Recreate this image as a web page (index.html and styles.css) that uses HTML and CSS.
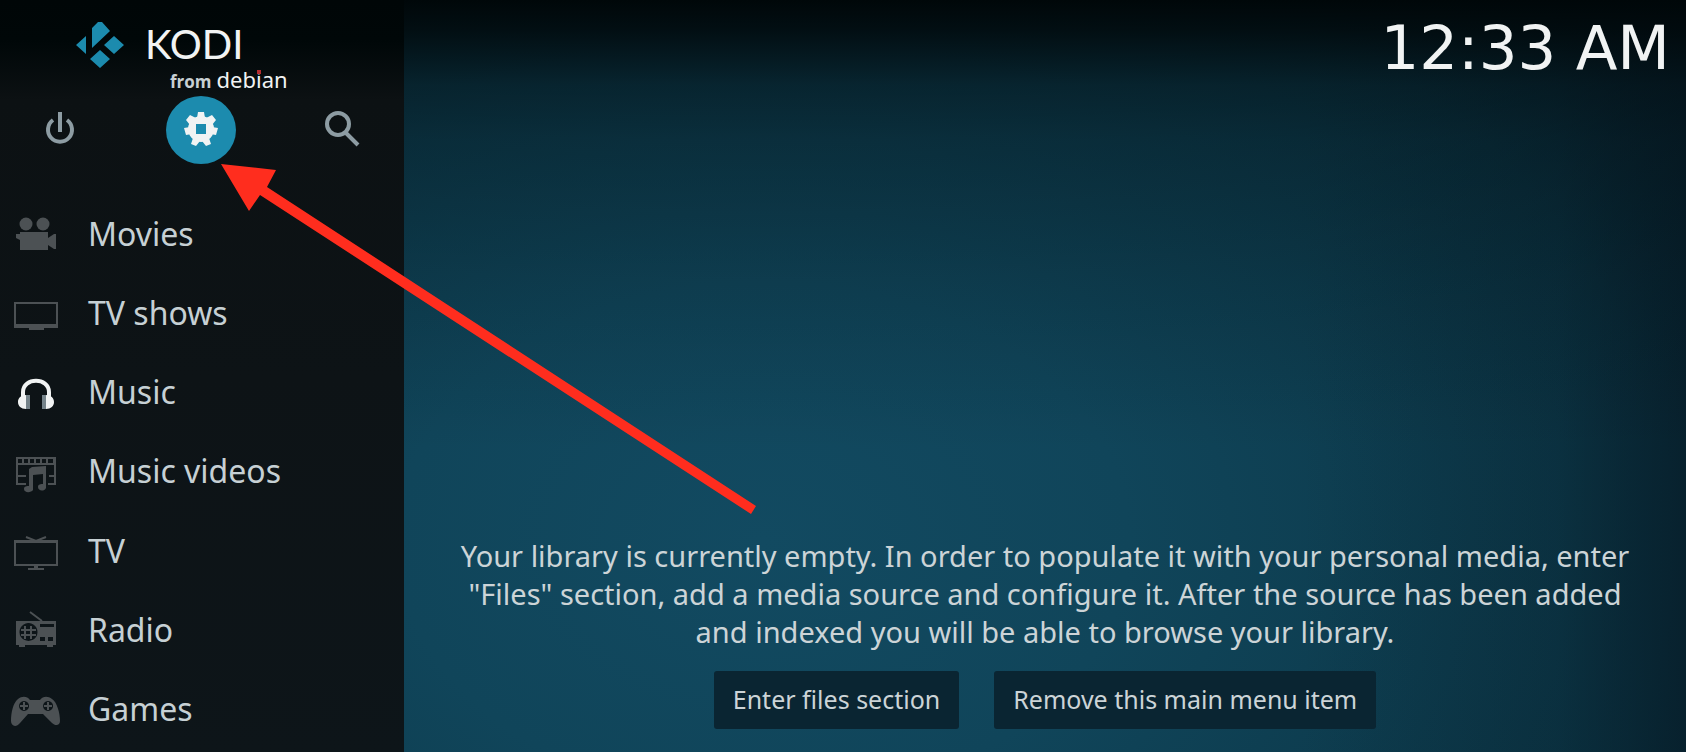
FILE: index.html
```html
<!DOCTYPE html>
<html lang="en">
<head>
<meta charset="utf-8">
<title>Kodi</title>
<link rel="stylesheet" href="styles.css">
</head>
<body>
<div class="home">
  <aside class="sidebar">
    <header class="brand">
      <svg class="brand-mark" viewBox="76 22 48 46" aria-hidden="true"><path d="M92 28l6-6h4l8 9-18 17zM86 36v18l-10-9zM114 36l10 9-10 9-10-9zM100 50l10 9-10 9-10-9z"/></svg>
      <div class="brand-text">
        <span class="brand-name">KODI</span>
        <span class="brand-origin"><span class="from">from</span> <span class="debian">deb<span class="dot">i</span>an</span></span>
      </div>
    </header>
    <div class="actions">
      <button class="action" type="button" aria-label="Power"><svg viewBox="0 0 36 36"><path class="line" d="M11 9a12 12 0 1 0 14 0M18 1v20"/></svg></button>
      <button class="action active" type="button" aria-label="Settings"><svg viewBox="0 0 36 36"><path fill-rule="evenodd" d="M18 5a13 13 0 1 0 .1 0zM13 13v10h10v-10z"/><path d="M15 1h6l1 6h-8zM3 9l4-5 6 3-6 7zM33 9l-4-5-6 3 6 7zM1 17l6-1 2 7-6 1zM35 17l-6-1-2 7 6 1zM8 33l2-6 7 3-4 5zM28 33l-2-6-7 3 4 5z"/></svg></button>
      <button class="action" type="button" aria-label="Search"><svg viewBox="0 0 36 36"><circle class="line" cx="14" cy="13" r="11"/><path class="line" d="M22 22l12 12"/></svg></button>
    </div>
    <nav class="menu">
      <a href="#" class="item"><svg viewBox="8 212 52 44"><circle cx="26" cy="224" r="6.5"/><circle cx="43" cy="224" r="6.5"/><path d="M16 234h4v-2h28v6l3-2 3-2h2v15h-2l-6-4v5H20v-10l-4-2z"/></svg>Movies</a>
      <a href="#" class="item"><svg viewBox="8 291 52 44"><path fill-rule="evenodd" d="M14 302h44v26H44v2H29v-2H14zM16 304v20h40v-20z"/></svg>TV shows</a>
      <a href="#" class="item selected"><svg viewBox="8 371 52 44"><path d="M23 399v-6c0-15 26-15 26 0v6" fill="none" stroke="currentColor" stroke-width="4"/><path d="M26 396v14c-5 0-8-3-8-7s3-7 8-7zM46 396v14c5 0 8-3 8-7s-3-7-8-7z"/><path class="shade" d="M26 396h4v14h-4zM42 396h4v14h-4z"/></svg>Music</a>
      <a href="#" class="item"><svg viewBox="8 450 52 44"><path fill-rule="evenodd" d="M16 458h40v28h-8v-2h6v-6h-5v-2h5v-10H18v10h8v2h-8v6h8v2H16zM18 460v4h4v-4zM24 460v4h4v-4zM30 460v4h4v-4zM36 460v4h4v-4zM42 460v4h4v-4zM48 460v4h5v-4z"/><path d="M29 470l3-2 14-1v22c-2 4-8 3-8-1 0-3 3-3 5-3v-10l-10 1v15c-2 3-9 3-9-1 0-3 3-3 5-3z"/></svg>Music videos</a>
      <a href="#" class="item"><svg viewBox="8 529 52 44"><path fill-rule="evenodd" d="M14 540h44v26H38v2h6v2H28v-2h6v-2H14zM16 543v21h40v-21z"/><path d="M26 537l10 4 10-4" fill="none" stroke="currentColor" stroke-width="2"/></svg>TV</a>
      <a href="#" class="item"><svg viewBox="8 609 52 44"><path fill-rule="evenodd" d="M16 622h40v24h-3v2h-6v-2H25v2h-6v-2h-3zM28 624a9 9 0 1 0 1 0zM40 625v3h14v-3zM40 638v4h5v-4zM48 638v4h5v-4z"/><path d="M30 613l12 9M25 627v13M31 627v13M21 631h15M21 636h15" fill="none" stroke="currentColor" stroke-width="2"/></svg>Radio</a>
      <a href="#" class="item"><svg viewBox="8 688 52 44"><path fill-rule="evenodd" d="M18 700c4-3 9-3 12 1h10c3-4 8-4 12-1 5 3 8 14 8 22 0 5-5 5-8 2l-9-9H28l-8 9c-4 5-9 3-9-2 0-8 2-18 7-22zM24 702a5 5 0 1 0 .1 0zM48 702a5 5 0 1 0 .1 0z"/><path d="M24 703v8M20 707h8M48 703v8M44 707h8" fill="none" stroke="currentColor" stroke-width="2"/></svg>Games</a>
    </nav>
  </aside>
  <main class="content">
    <time class="clock">12:33 AM</time>
    <section class="empty">
      <p class="message">Your library is currently empty. In order to populate it with your personal media, enter "Files" section, add a media source and configure it. After the source has been added and indexed you will be able to browse your library.</p>
      <div class="choices">
        <button class="choice" type="button">Enter files section</button>
        <button class="choice" type="button">Remove this main menu item</button>
      </div>
    </section>
  </main>
  <svg class="pointer" viewBox="0 0 760 520" aria-hidden="true"><path d="M221 164l55 6-9 17 489 319-5 8-491-319-11 16z"/></svg>
</div>
</body>
</html>
```
FILE: styles.css
```css
* {
  box-sizing: border-box;
}

body {
  margin: 0;
  background: #000;
  font-family: "Noto Sans", "Open Sans", sans-serif;
}

.home {
  position: relative;
  display: flex;
  min-height: 100vh;
  overflow: hidden;
}

.sidebar {
  display: flex;
  flex: 0 0 404px;
  flex-direction: column;
  padding-bottom: 3px;
  background: linear-gradient(#000607 0, #000708 40px, #0c1113 100px, #0d1316 50%, #0d1519 100%);
}

.brand {
  display: flex;
  align-items: flex-start;
  gap: 21px;
  height: 96px;
  padding: 22px 0 0 76px;
}

.brand-mark {
  width: 48px;
  height: 46px;
  fill: #1c8bae;
}

.brand-text {
  display: flex;
  flex-direction: column;
  color: #f1f3f3;
}

.brand-name {
  font: 40px/44px Lato, sans-serif;
}

.brand-origin {
  display: flex;
  align-items: baseline;
  gap: 5px;
  padding-left: 25px;
}

.from {
  color: #c8d0d3;
  font: bold 17px/26px "Open Sans", sans-serif;
}

.debian {
  font: 22px/26px "Noto Sans", sans-serif;
}

.dot {
  position: relative;
}

.dot::after {
  position: absolute;
  top: 6px;
  left: 1px;
  width: 4px;
  height: 4px;
  background: #b52c30;
  content: "";
}

.actions {
  display: flex;
  justify-content: space-between;
  height: 98px;
  padding: 0 27px 0 25px;
}

.action {
  display: grid;
  place-items: center;
  width: 70px;
  height: 68px;
  padding: 0 0 2px;
  border: 0;
  border-radius: 50%;
  background: none;
  color: #8d9ca3;
}

.action.active {
  background: #1c8bae;
  color: #f1f3f3;
}

.action svg {
  width: 36px;
  height: 36px;
  fill: currentColor;
}

.action .line {
  fill: none;
  stroke: currentColor;
  stroke-width: 4;
}

.menu {
  display: flex;
  flex: 1;
  flex-direction: column;
}

.item {
  display: flex;
  flex: 1;
  align-items: center;
  gap: 28px;
  padding-left: 8px;
  color: #c6d0d4;
  font-size: 32px;
  line-height: 44px;
  text-decoration: none;
}

.item svg {
  width: 52px;
  height: 44px;
  color: #4c5154;
  fill: currentColor;
}

.item.selected svg {
  color: #f1f3f3;
}

.item .shade {
  fill: #75838a;
}

.content {
  display: flex;
  flex: 1;
  flex-direction: column;
  justify-content: space-between;
  padding: 13px 16px 23px;
  background:
    linear-gradient(#000709 0, rgba(0, 7, 9, 0.85) 30px, rgba(0, 7, 9, 0.45) 85px, rgba(0, 7, 9, 0.3) 140px, rgba(0, 7, 9, 0.15) 280px, rgba(0, 7, 9, 0) 450px),
    linear-gradient(90deg, rgba(7, 30, 42, 0) 70%, rgba(7, 30, 42, 0.3) 90%, rgba(7, 30, 42, 0.85) 100%),
    radial-gradient(ellipse 95% 115% at 28% 72%, #124a61 0, #10455a 30%, #0b3545 75%, #08222e 100%);
}

.clock {
  align-self: flex-end;
  color: #f1f3f3;
  font: 61px/70px "DejaVu Sans", sans-serif;
}

.message {
  margin: 0 24px 20px;
  color: #ccd4d7;
  font-size: 29px;
  line-height: 38px;
  text-align: center;
}

.choices {
  display: flex;
  justify-content: center;
  gap: 35px;
}

.choice {
  height: 58px;
  padding: 0 19px 3px;
  border: 0;
  border-radius: 3px;
  background: #0a2532;
  color: #ccd4d7;
  font: 25px/34px "Noto Sans", "Open Sans", sans-serif;
}

.pointer {
  position: absolute;
  top: 0;
  left: 0;
  width: 760px;
  height: 520px;
  fill: #ff2d1e;
  pointer-events: none;
}
```
